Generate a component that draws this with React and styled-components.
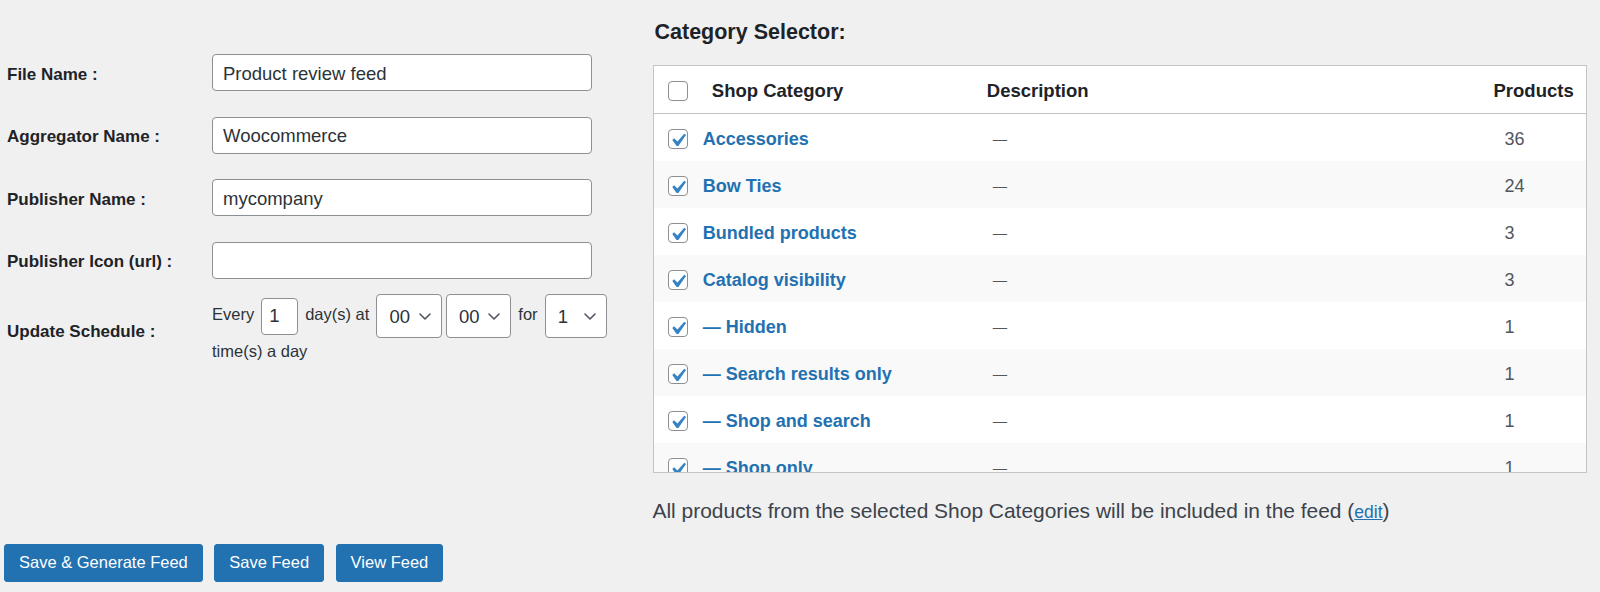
import React from "react";
import styled, { createGlobalStyle } from "styled-components";

const GlobalStyle = createGlobalStyle`
  body {
    margin: 0;
    background: #f0f0f1;
    font-family: "Liberation Sans", Arial, sans-serif;
    color: #2c3338;
  }
  * {
    box-sizing: border-box;
  }
`;

const Page = styled.div`
  width: 1600px;
  height: 592px;
  padding-left: 4px;
  overflow: hidden;
`;

const Columns = styled.div`
  display: flex;
`;

const FormColumn = styled.div`
  flex: 0 0 648.5px;
  padding-top: 54px;
  display: flex;
  flex-direction: column;
`;

const FormRow = styled.div`
  display: grid;
  grid-template-columns: 208px 1fr;
  align-items: center;
  margin-top: ${(p) => p.$gap || 0}px;
`;

const Label = styled.label`
  padding: 4px 0 0 3px;
  font-size: 17px;
  font-weight: 700;
  color: #1d2327;
`;

const TextInput = styled.input`
  width: 380px;
  height: 37px;
  padding: 2px 10px 0;
  border: 1px solid #8c8f94;
  border-radius: 4px;
  background: #fff;
  font-family: inherit;
  font-size: 18.5px;
  color: #2c3338;
  outline: none;
`;

const Schedule = styled.div`
  display: flex;
  flex-direction: column;
`;

const ScheduleLine = styled.div`
  display: flex;
  align-items: center;
  gap: 7px;
  height: 44px;
  font-size: 16.5px;
  color: #2c3338;
`;

const ScheduleWord = styled.span`
  padding-bottom: 3px;
`;

const ScheduleTail = styled.div`
  font-size: 16.5px;
  line-height: 27px;
  color: #2c3338;
`;

const NumberInput = styled.input`
  width: 37px;
  height: 37px;
  padding: 0 0 0 7px;
  border: 1px solid #8c8f94;
  border-radius: 4px;
  background: #fff;
  font-family: inherit;
  font-size: 18.5px;
  color: #2c3338;
  outline: none;
  appearance: textfield;
  &::-webkit-inner-spin-button,
  &::-webkit-outer-spin-button {
    -webkit-appearance: none;
    margin: 0;
  }
`;

const SelectBox = styled.div`
  position: relative;
  margin-left: ${(p) => (p.$tight ? -3 : 0)}px;
`;

const Select = styled.select`
  width: ${(p) => p.$width}px;
  height: 44px;
  padding: 0 0 0 12px;
  border: 1px solid #8c8f94;
  border-radius: 4px;
  background: #fff;
  font-family: inherit;
  font-size: 18.5px;
  color: #2c3338;
  appearance: none;
  outline: none;
`;

const Chevron = styled.svg`
  position: absolute;
  right: 11px;
  top: 19px;
  width: 12px;
  height: 7px;
  pointer-events: none;
`;

const ButtonRow = styled.div`
  display: flex;
  gap: 11.5px;
  margin-top: 18px;
`;

const Button = styled.button`
  height: 38px;
  padding: 0 14px;
  border: 1px solid #2271b1;
  border-radius: 3px;
  background: #2271b1;
  color: #fff;
  font-family: inherit;
  font-size: 16.5px;
  cursor: pointer;
`;

const CategoryPanel = styled.div`
  flex: 0 0 933px;
  padding-top: 18px;
`;

const Heading = styled.h2`
  margin: 0 0 18.7px;
  padding-left: 2px;
  font-size: 21.5px;
  line-height: 28px;
  font-weight: 700;
  color: #1d2327;
`;

const TableBox = styled.div`
  height: 408px;
  border: 1px solid #c3c4c7;
  background: #fff;
  overflow: hidden;
`;

const Row = styled.div`
  display: grid;
  grid-template-columns: 41px 289px 510px 1fr;
  align-items: center;
  height: ${(p) => (p.$head ? 48 : 47)}px;
  background: ${(p) => (p.$striped ? "#f9f9f9" : "#fff")};
  border-bottom: ${(p) => (p.$head ? "1px solid #c3c4c7" : "none")};
`;

const CheckCell = styled.div`
  display: flex;
  padding-left: 14.3px;
`;

const HeadCell = styled.div`
  padding-top: 4px;
  font-size: 18.5px;
  font-weight: 700;
  color: #1d2327;
  padding-left: ${(p) => p.$pad || 0}px;
  text-align: ${(p) => (p.$right ? "right" : "left")};
  padding-right: ${(p) => (p.$right ? 12.3 : 0)}px;
`;

const NameLink = styled.a`
  padding: 4px 0 0 8.3px;
  font-size: 18px;
  font-weight: 700;
  color: #2271b1;
  text-decoration: none;
  white-space: nowrap;
`;

const Dash = styled.div`
  display: flex;
  align-items: center;
  padding: 4px 0 0 9.3px;
  height: 47px;
  font-size: 14.3px;
  color: #50575e;
`;

const Count = styled.div`
  padding: 4px 0 0 11px;
  font-size: 18px;
  color: #50575e;
`;

const Box = styled.span`
  position: relative;
  display: inline-block;
  width: 20px;
  height: 20px;
  margin-top: 3px;
  border: 1px solid #8c8f94;
  border-radius: 4px;
  background: #fff;
`;

const Tick = styled.svg`
  position: absolute;
  left: -1px;
  top: -1px;
  width: 20px;
  height: 20px;
`;

const FooterNote = styled.p`
  margin: 24px 0 0;
  font-size: 20.95px;
  line-height: 28px;
  color: #3c434a;
`;

const EditLink = styled.a`
  font-size: 17.5px;
  color: #2271b1;
  text-decoration: underline;
`;

const Checkbox = ({ checked }) => (
  <Box>
    {checked && (
      <Tick viewBox="2.52 1.33 15.15 15.15">
        <path
          d="M14.83 4.89l1.34.94-5.81 8.38H9.02L5.78 9.67l1.34-1.25 2.57 2.4z"
          fill="#3582c4"
        />
      </Tick>
    )}
  </Box>
);

const TimeSelect = ({ value, width, tight, options }) => (
  <SelectBox $tight={tight}>
    <Select $width={width} defaultValue={value}>
      {options.map((o) => (
        <option key={o}>{o}</option>
      ))}
    </Select>
    <Chevron viewBox="0 0 12 7">
      <polyline
        points="1,1 6,6 11,1"
        fill="none"
        stroke="#50575e"
        strokeWidth="1.6"
        strokeLinecap="round"
        strokeLinejoin="round"
      />
    </Chevron>
  </SelectBox>
);

const hours = Array.from({ length: 24 }, (_, i) => String(i).padStart(2, "0"));
const minutes = ["00", "15", "30", "45"];
const times = ["1", "2", "3", "4"];

const categories = [
  { name: "Accessories", count: 36 },
  { name: "Bow Ties", count: 24 },
  { name: "Bundled products", count: 3 },
  { name: "Catalog visibility", count: 3 },
  { name: "— Hidden", count: 1 },
  { name: "— Search results only", count: 1 },
  { name: "— Shop and search", count: 1 },
  { name: "— Shop only", count: 1 },
];

const fields = [
  { label: "File Name :", value: "Product review feed" },
  { label: "Aggregator Name :", value: "Woocommerce" },
  { label: "Publisher Name :", value: "mycompany" },
  { label: "Publisher Icon (url) :", value: "" },
];

const App = () => {
  return (
    <Page>
      <GlobalStyle />
      <Columns>
        <FormColumn>
          {fields.map((f, i) => (
            <FormRow key={f.label} $gap={i === 0 ? 0 : 25.5}>
              <Label>{f.label}</Label>
              <TextInput defaultValue={f.value} />
            </FormRow>
          ))}
          <FormRow $gap={15.8}>
            <Label>Update Schedule :</Label>
            <Schedule>
              <ScheduleLine>
                <ScheduleWord>Every</ScheduleWord>
                <NumberInput type="number" defaultValue="1" />
                <ScheduleWord>day(s) at</ScheduleWord>
                <TimeSelect value="00" width={65.7} options={hours} />
                <TimeSelect value="00" width={65.3} options={minutes} tight />
                <ScheduleWord>for</ScheduleWord>
                <TimeSelect value="1" width={62.6} options={times} />
              </ScheduleLine>
              <ScheduleTail>time(s) a day</ScheduleTail>
            </Schedule>
          </FormRow>
        </FormColumn>

        <CategoryPanel>
          <Heading>Category Selector:</Heading>
          <TableBox>
            <Row $head>
              <CheckCell>
                <Checkbox />
              </CheckCell>
              <HeadCell $pad={17.3}>Shop Category</HeadCell>
              <HeadCell $pad={3.3}>Description</HeadCell>
              <HeadCell $right>Products</HeadCell>
            </Row>
            {categories.map((c, i) => (
              <Row key={c.name} $striped={i % 2 === 1}>
                <CheckCell>
                  <Checkbox checked />
                </CheckCell>
                <NameLink href="#">{c.name}</NameLink>
                <Dash>—</Dash>
                <Count>{c.count}</Count>
              </Row>
            ))}
          </TableBox>
          <FooterNote>
            All products from the selected Shop Categories will be included in
            the feed (<EditLink href="#">edit</EditLink>)
          </FooterNote>
        </CategoryPanel>
      </Columns>

      <ButtonRow>
        <Button>Save &amp; Generate Feed</Button>
        <Button>Save Feed</Button>
        <Button>View Feed</Button>
      </ButtonRow>
    </Page>
  );
};

export default App;
